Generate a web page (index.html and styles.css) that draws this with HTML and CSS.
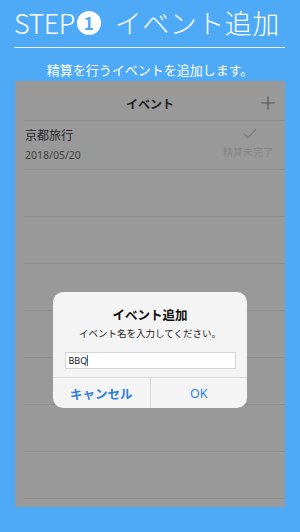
FILE: index.html
```html
<!DOCTYPE html>
<html lang="ja">
<head>
<meta charset="utf-8">
<link rel="stylesheet" href="styles.css">
</head>
<body>
<div class="page">
  <header class="hero">
    <h1 class="hero-title"><span class="step">STEP</span><span class="num">1</span><span class="hero-jp">イベント追加</span></h1>
    <p class="hero-sub">精算を行うイベントを追加します。</p>
  </header>
  <div class="screen">
    <div class="nav">
      <span class="nav-title">イベント</span>
      <svg class="nav-plus" width="14" height="14" viewBox="0 0 14 14"><path d="M7 0.5V13.5M0.5 7H13.5" stroke="#555" stroke-width="1.2" fill="none"/></svg>
    </div>
    <div class="list">
      <div class="row row-event">
        <div class="row-main">
          <span class="ev-name">京都旅行</span>
          <span class="ev-date">2018/05/20</span>
        </div>
        <div class="row-side">
          <svg class="check" width="14" height="11" viewBox="0 0 14 11"><path d="M1 6L5 9.8L13 1" stroke="#7a7a7a" stroke-width="1.2" fill="none"/></svg>
          <span class="status">精算未完了</span>
        </div>
      </div>
      <div class="row"></div>
      <div class="row"></div>
      <div class="row"></div>
      <div class="row"></div>
      <div class="row"></div>
      <div class="row"></div>
      <div class="row"></div>
    </div>
    <div class="dialog">
      <div class="dialog-body">
        <div class="dialog-title">イベント追加</div>
        <div class="dialog-msg">イベント名を入力してください。</div>
        <div class="dialog-input"><span>BBQ</span><span class="caret"></span></div>
      </div>
      <div class="dialog-buttons">
        <span class="btn btn-cancel">キャンセル</span>
        <span class="btn btn-ok">OK</span>
      </div>
    </div>
  </div>
</div>
</body>
</html>
```

FILE: styles.css
```css
html, body {
  margin: 0;
  padding: 0;
}
body {
  width: 300px;
  height: 532px;
  background: #4eaaf6;
  font-family: "Noto Sans CJK JP", "Noto Sans", sans-serif;
  overflow: hidden;
}
.page {
  display: flex;
  flex-direction: column;
  height: 532px;
}
.hero {
  display: flex;
  flex-direction: column;
  align-items: stretch;
}
.hero-title {
  margin: 0 15px 0 14px;
  height: 48px;
  border-bottom: 1px solid rgba(255,255,255,0.85);
  display: flex;
  align-items: center;
  color: #fff;
  font-weight: 300;
  font-size: 27px;
  line-height: 1;
  white-space: nowrap;
  padding-bottom: 2px;
  box-sizing: border-box;
}
.step {
  letter-spacing: -0.5px;
}
.num {
  width: 24px;
  height: 24px;
  border-radius: 50%;
  background: #fff;
  color: #4eaaf6;
  font-size: 17px;
  font-weight: 700;
  display: flex;
  align-items: center;
  justify-content: center;
  margin-left: 2px;
  margin-right: 14px;
}
.hero-jp {
  letter-spacing: 0.5px;
}
.hero-sub {
  margin: 0;
  height: 33px;
  display: flex;
  align-items: center;
  justify-content: center;
  padding-top: 10px;
  box-sizing: border-box;
  color: #fff;
  font-size: 13px;
  line-height: 1;
}
.screen {
  position: relative;
  margin: 0 15px;
  height: 426px;
  background: #999999;
  overflow: hidden;
}
.nav {
  height: 40px;
  border-bottom: 1px solid #8d8d8d;
  margin-left: 9px;
  display: flex;
  align-items: center;
  justify-content: center;
  position: relative;
  padding-top: 5px;
  box-sizing: border-box;
}
.nav-title {
  font-size: 12px;
  font-weight: 700;
  color: #1f1f1f;
  margin-left: -9px;
}
.nav-plus {
  position: absolute;
  right: 10px;
  top: 15px;
}
.list {
  display: flex;
  flex-direction: column;
  margin-left: 9px;
}
.row {
  height: 46px;
  border-bottom: 1px solid #8d8d8d;
  flex: none;
}
.row-event {
  height: 49px;
  display: flex;
  justify-content: space-between;
  padding: 0 12px 0 1px;
  box-sizing: border-box;
}
.row-main {
  display: flex;
  flex-direction: column;
  padding-top: 7px;
}
.ev-name {
  font-size: 12px;
  color: #262626;
  line-height: 14px;
}
.ev-date {
  font-family: "Noto Sans", sans-serif;
  font-size: 10.5px;
  color: #404040;
  margin-top: 7px;
  line-height: 12px;
}
.row-side {
  display: flex;
  flex-direction: column;
  align-items: center;
  padding-top: 7px;
}
.check {
  margin-left: 4px;
}
.status {
  font-size: 10px;
  color: #878787;
  margin-top: 7px;
  line-height: 12px;
}
.dialog {
  position: absolute;
  left: 38px;
  top: 211px;
  width: 194px;
  height: 116px;
  background: #f4f4f4;
  border-radius: 10px;
  display: flex;
  flex-direction: column;
}
.dialog-body {
  flex: 1;
  display: flex;
  flex-direction: column;
  align-items: center;
  padding-top: 15px;
  border-bottom: 1px solid #d9d9d9;
}
.dialog-title {
  font-size: 12.5px;
  font-weight: 700;
  color: #111;
  line-height: 16px;
}
.dialog-msg {
  font-size: 9.5px;
  color: #222;
  line-height: 12px;
  margin-top: 4px;
}
.dialog-input {
  margin-top: 13px;
  width: 171px;
  height: 17px;
  box-sizing: border-box;
  background: #fff;
  border: 1px solid #d4d4d4;
  display: flex;
  align-items: center;
  padding-left: 3px;
  font-family: "Noto Sans", sans-serif;
  font-size: 9px;
  color: #111;
}
.caret {
  width: 1px;
  height: 11px;
  background: #2d6fd8;
  margin-left: 0;
}
.dialog-buttons {
  height: 30px;
  display: flex;
}
.btn {
  flex: 1;
  display: flex;
  align-items: center;
  justify-content: center;
  color: #2f80dc;
  font-size: 12.5px;
  padding-top: 1px;
}
.btn-cancel {
  font-weight: 700;
  border-right: 1px solid #d9d9d9;
}
.btn-ok {
  font-family: "Noto Sans", sans-serif;
}
```
